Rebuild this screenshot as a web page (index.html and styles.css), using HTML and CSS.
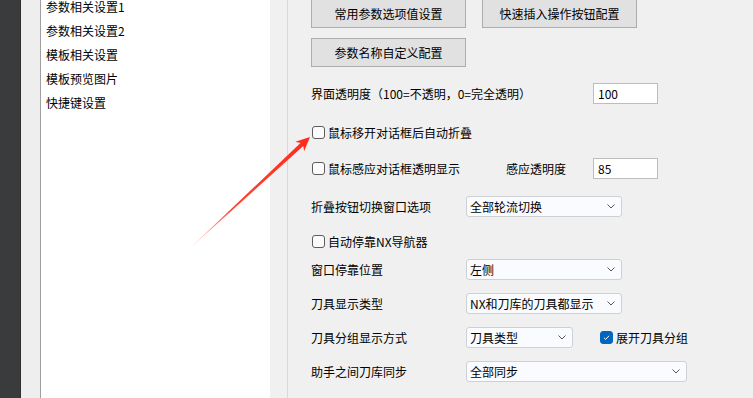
FILE: index.html
```html
<!DOCTYPE html>
<html lang="zh-CN">
<head>
    <meta charset="UTF-8">
    <title>助手设置</title>
    <link rel="stylesheet" href="styles.css">
</head>
<body>
    <div class="dock"></div>
    <div class="gutter"></div>

    <div class="nav-list">
        <div class="nav-items">
            <div class="nav-item">参数相关设置1</div>
            <div class="nav-item">参数相关设置2</div>
            <div class="nav-item">模板相关设置</div>
            <div class="nav-item">模板预览图片</div>
            <div class="nav-item">快捷键设置</div>
        </div>
    </div>

    <div class="settings">
        <div class="btn-row first">
            <div class="btn">常用参数选项值设置</div>
            <div class="btn">快速插入操作按钮配置</div>
        </div>
        <div class="btn-row">
            <div class="btn">参数名称自定义配置</div>
        </div>

        <div class="row mt-16">
            <div class="label wide">界面透明度（100=不透明，0=完全透明）</div>
            <div class="text-input">100</div>
        </div>

        <div class="row mt-18">
            <div class="check"><span class="box"></span>鼠标移开对话框后自动折叠</div>
        </div>

        <div class="row mt-15">
            <div class="check fixed"><span class="box"></span>鼠标感应对话框透明显示</div>
            <div class="label short">感应透明度</div>
            <div class="text-input">85</div>
        </div>

        <div class="row mt-17">
            <div class="label">折叠按钮切换窗口选项</div>
            <div class="select">全部轮流切换<svg width="8" height="5" viewBox="0 0 8 5"><path d="M0.5 0.5 L4 4 L7.5 0.5" fill="none" stroke="#555" stroke-width="1"/></svg></div>
        </div>

        <div class="row mt-14">
            <div class="check"><span class="box"></span>自动停靠NX导航器</div>
        </div>

        <div class="row mt-7">
            <div class="label">窗口停靠位置</div>
            <div class="select">左侧<svg width="8" height="5" viewBox="0 0 8 5"><path d="M0.5 0.5 L4 4 L7.5 0.5" fill="none" stroke="#555" stroke-width="1"/></svg></div>
        </div>

        <div class="row mt-13">
            <div class="label">刀具显示类型</div>
            <div class="select">NX和刀库的刀具都显示<svg width="8" height="5" viewBox="0 0 8 5"><path d="M0.5 0.5 L4 4 L7.5 0.5" fill="none" stroke="#555" stroke-width="1"/></svg></div>
        </div>

        <div class="row mt-13">
            <div class="label">刀具分组显示方式</div>
            <div class="select narrow">刀具类型<svg width="8" height="5" viewBox="0 0 8 5"><path d="M0.5 0.5 L4 4 L7.5 0.5" fill="none" stroke="#555" stroke-width="1"/></svg></div>
            <div class="check after-select"><span class="box on"><svg width="11" height="11" viewBox="0 0 11 11"><path d="M3 5.8 L4.7 7.4 L8 3.8" fill="none" stroke="#fff" stroke-width="1"/></svg></span>展开刀具分组</div>
        </div>

        <div class="row mt-13">
            <div class="label">助手之间刀库同步</div>
            <div class="select long">全部同步<svg width="8" height="5" viewBox="0 0 8 5"><path d="M0.5 0.5 L4 4 L7.5 0.5" fill="none" stroke="#555" stroke-width="1"/></svg></div>
        </div>
    </div>

    <!-- 标注箭头 -->
    <svg class="pointer" width="753" height="398" viewBox="0 0 753 398">
        <defs>
            <linearGradient id="arrowFade" x1="188" y1="250" x2="310" y2="137" gradientUnits="userSpaceOnUse">
                <stop offset="0" stop-color="#ff5a4a" stop-opacity="0.15"/>
                <stop offset="0.35" stop-color="#ff3020" stop-opacity="0.9"/>
                <stop offset="1" stop-color="#ff2a1a"/>
            </linearGradient>
        </defs>
        <polygon points="310,137 304.1,151.3 303.3,146 188,250 300.5,143 295.3,141.7" fill="url(#arrowFade)"/>
    </svg>
</body>
</html>
```

FILE: styles.css
```css
body {
    margin: 0;
    height: 398px;
    overflow: hidden;
    display: flex;
    position: relative;
    background: #f0f0f0;
    color: #000;
    font-family: "Noto Sans CJK SC", "Microsoft YaHei", sans-serif;
    font-size: 12px;
}

/* 左侧深色边栏 */
.dock {
    width: 21px;
    background: #3a3b3d;
    border-right: 1px solid #2e2f31;
    box-sizing: border-box;
}

.gutter {
    width: 19px;
    background: #eeeeee;
}

/* 设置分类列表 */
.nav-list {
    width: 229px;
    background: #fff;
    border-left: 1px solid #a0a0a0;
}

.nav-items {
    margin-top: -5px;
    padding-left: 5px;
}

.nav-item {
    height: 24px;
    line-height: 24px;
}

/* 右侧设置区 */
.settings {
    margin-left: 17px;
    padding-left: 23px;
    border-left: 1px solid #d9d9d9;
    display: flex;
    flex-direction: column;
    flex: 1;
}

.btn-row {
    display: flex;
    gap: 16px;
    margin-top: 10px;
}

.btn-row.first {
    margin-top: -1px;
}

.btn {
    width: 155px;
    height: 29px;
    box-sizing: border-box;
    background: #e1e1e1;
    border: 1px solid #adadad;
    display: flex;
    align-items: center;
    justify-content: center;
}

.row {
    display: flex;
    align-items: center;
    height: 21px;
}

.mt-7 { margin-top: 7px; }
.mt-13 { margin-top: 13px; }
.mt-14 { margin-top: 14px; }
.mt-15 { margin-top: 15px; }
.mt-16 { margin-top: 16px; }
.mt-17 { margin-top: 17px; }
.mt-18 { margin-top: 18px; }

.label {
    width: 155px;
    white-space: nowrap;
}

.label.wide {
    width: 282px;
}

.label.short {
    width: 87px;
}

.text-input {
    width: 65px;
    height: 21px;
    box-sizing: border-box;
    background: #fff;
    border: 1px solid #bdbdbd;
    padding-left: 4px;
    display: flex;
    align-items: center;
}

.select {
    width: 156px;
    height: 21px;
    box-sizing: border-box;
    background: #f9fbfe;
    border: 1px solid #cdd0d4;
    border-radius: 3px;
    padding: 0 6px 0 3px;
    display: flex;
    align-items: center;
    white-space: nowrap;
}

.select svg {
    margin-left: auto;
}

.select.narrow {
    width: 107px;
}

.select.long {
    width: 221px;
}

.check {
    display: flex;
    align-items: center;
    gap: 3px;
    padding-left: 1px;
    white-space: nowrap;
}

.check.fixed {
    width: 194px;
}

.check.after-select {
    margin-left: 26px;
}

.box {
    width: 13px;
    height: 13px;
    box-sizing: border-box;
    border: 1px solid #5c5c5c;
    border-radius: 3px;
    background: #fbfbfb;
    display: flex;
    align-items: center;
    justify-content: center;
}

.box.on {
    background: #0067c0;
    border-color: #0067c0;
}

.pointer {
    position: absolute;
    left: 0;
    top: 0;
    pointer-events: none;
}
```
